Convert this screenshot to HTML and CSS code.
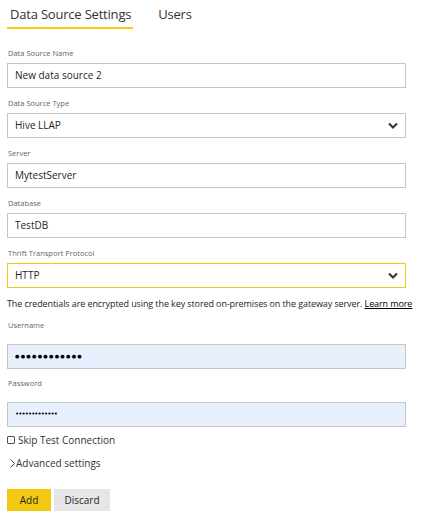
FILE: index.html
```html
<!DOCTYPE html>
<html>
<head>
<meta charset="utf-8">
<link rel="stylesheet" href="styles.css">
</head>
<body>
<div class="panel">
  <div class="tabs">
    <div class="tab active">Data Source Settings</div>
    <div class="tab">Users</div>
  </div>

  <div class="field first">
    <div class="label">Data Source Name</div>
    <div class="input">New data source 2</div>
  </div>
  <div class="field">
    <div class="label">Data Source Type</div>
    <div class="input select">Hive LLAP
      <svg class="chev" width="10" height="7" viewBox="0 0 10 7"><polyline points="1,1.5 5,5.5 9,1.5" fill="none" stroke="#333" stroke-width="2"/></svg>
    </div>
  </div>
  <div class="field">
    <div class="label">Server</div>
    <div class="input">MytestServer</div>
  </div>
  <div class="field">
    <div class="label">Database</div>
    <div class="input">TestDB</div>
  </div>
  <div class="field">
    <div class="label">Thrift Transport Protocol</div>
    <div class="input select focus">HTTP
      <svg class="chev" width="10" height="7" viewBox="0 0 10 7"><polyline points="1,1.5 5,5.5 9,1.5" fill="none" stroke="#333" stroke-width="2"/></svg>
    </div>
  </div>

  <p class="note">The credentials are encrypted using the key stored on-premises on the gateway server. <a href="#">Learn more</a></p>

  <div class="field cred">
    <div class="label">Username</div>
    <div class="input filled"><span class="dots big">●●●●●●●●●●●●</span></div>
  </div>
  <div class="field cred">
    <div class="label">Password</div>
    <div class="input filled"><span class="dots small">•••••••••••••</span></div>
  </div>

  <label class="check"><span class="box"></span>Skip Test Connection</label>
  <div class="adv"><svg width="5" height="9" viewBox="0 0 5 9"><polyline points="0.5,0.5 4.5,4.5 0.5,8.5" fill="none" stroke="#444" stroke-width="1"/></svg>Advanced settings</div>

  <div class="buttons">
    <button class="btn primary">Add</button>
    <button class="btn">Discard</button>
  </div>
</div>
</body>
</html>
```
FILE: styles.css
```css
* { box-sizing: border-box; }
body {
  margin: 0;
  background: #fff;
  font-family: "Open Sans", "Noto Sans", sans-serif;
  color: #252423;
}
.panel {
  padding: 0 10px 0 7px;
  width: 426px;
}
.tabs {
  display: flex;
  gap: 22px;
  height: 29px;
}
.tab {
  font-size: 13px;
  line-height: 20px;
  padding: 4px 2px 0 3px;
  color: #333;
  white-space: nowrap;
  letter-spacing: -0.2px;
}
.tab.active {
  border-bottom: 2px solid #f2c811;
}
.field { margin-top: 10px; }
.field.first { margin-top: 19px; }
.label {
  font-size: 7.5px;
  line-height: 10px;
  color: #666;
  margin-bottom: 5px;
  padding-left: 1px;
}
.input {
  width: 399px;
  height: 25px;
  border: 1px solid #c8c6c4;
  font-size: 10px;
  line-height: 23px;
  padding-left: 7px;
  color: #252423;
  display: flex;
  align-items: center;
}
.select { justify-content: space-between; padding-right: 7px; }
.focus { border-color: #f2c811; }
.chev { display: block; }
.note {
  margin: 9px 0 0 0;
  font-size: 9px;
  line-height: 14px;
  color: #252423;
  white-space: nowrap;
  letter-spacing: -0.1px;
}
.note a { color: #000; text-decoration: underline; }
.cred { margin-top: 9px; }
.cred .label { margin-bottom: 14px; }
.filled { background: #e8f0fe; }
.dots { color: #000; font-family: "DejaVu Sans", sans-serif; }
.dots.big { font-size: 5px; letter-spacing: 1.3px; }
.dots.small { font-size: 7px; letter-spacing: -0.9px; }
.check {
  display: flex;
  align-items: center;
  gap: 3px;
  margin-top: 7px;
  font-size: 10px;
  line-height: 12px;
  color: #333;
}
.box {
  width: 8px;
  height: 8px;
  border: 1px solid #555;
  border-radius: 1px;
}
.adv {
  display: flex;
  align-items: center;
  gap: 1px;
  margin-top: 11px;
  padding-left: 3px;
  font-size: 10px;
  line-height: 12px;
  color: #333;
}
.buttons {
  display: flex;
  gap: 3px;
  margin-top: 20px;
}
.btn {
  height: 22px;
  border: 0;
  font-family: inherit;
  font-size: 10px;
  color: #252423;
  background: #e6e6e6;
  padding: 0;
  width: 56px;
}
.btn.primary { background: #f2c811; width: 44px; }
```
